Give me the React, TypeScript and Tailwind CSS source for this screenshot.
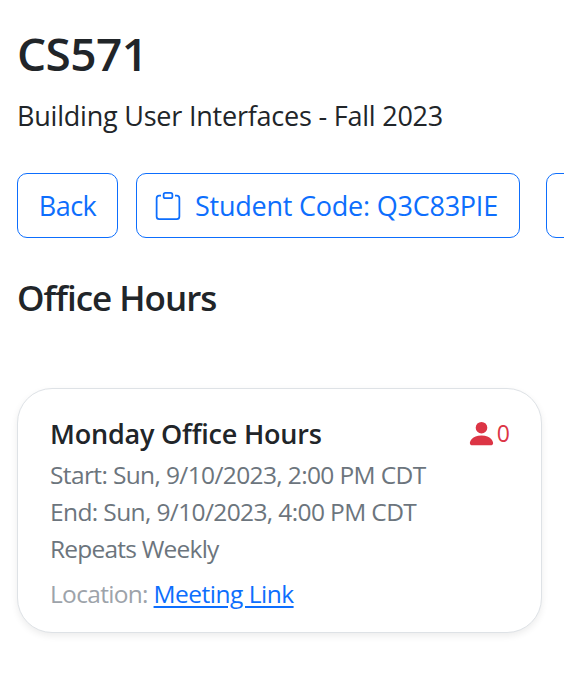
import { BsClipboard, BsPersonFill } from "react-icons/bs";

const details = [
  { text: "Start: Sun, 9/10/2023, 2:00 PM CDT", spacing: "tracking-[-0.63px]" },
  { text: "End: Sun, 9/10/2023, 4:00 PM CDT", spacing: "tracking-[-0.62px]" },
  { text: "Repeats Weekly", spacing: "tracking-[-0.78px]" },
];

export default function App() {
  return (
    <main className="h-[680px] w-full overflow-hidden whitespace-nowrap bg-white pl-[17px] pt-[25px] font-['Open_Sans',sans-serif] text-[#212529]">
      <h1 className="text-[46px] leading-[56px] font-semibold tracking-[-0.6px]">CS571</h1>
      <p className="mt-[14px] text-[27px] leading-[42px] tracking-[-0.22px]">Building User Interfaces - Fall 2023</p>
      <nav className="mt-[36px] flex h-[65px] text-[27px] text-[#0d6efd]">
        <button className="flex w-[101px] shrink-0 items-center justify-center rounded-[10px] border border-[#0d6efd] pt-px tracking-[-0.5px]">Back</button>
        <button className="ml-[18px] flex w-[384px] shrink-0 items-center rounded-[10px] border border-[#0d6efd] pl-[17px] pt-px tracking-[-0.23px]">
          <BsClipboard className="h-[28px] w-[28px] shrink-0" />
          <span className="ml-[13px]">Student Code: Q3C83PIE</span>
        </button>
        <button aria-label="More" className="ml-[26px] w-[120px] shrink-0 rounded-[10px] border border-[#0d6efd]" />
      </nav>
      <h2 className="mt-[38px] text-[35px] leading-[44px] font-semibold tracking-[-1px]">Office Hours</h2>
      <section className="mt-[68px] h-[245px] w-[525px] rounded-[35px] border border-[#dee2e6] bg-white px-[32px] pt-[27px] shadow-[0_3px_7px_rgba(0,0,0,0.075)]">
        <header className="flex h-[40px] items-center justify-between">
          <h3 className="-mt-[4px] text-[27px] leading-[36px] font-semibold tracking-[-0.2px]">Monday Office Hours</h3>
          <div className="-mt-[6px] -mr-px flex items-center text-[23px] text-[#dc3545]">
            <BsPersonFill className="h-[31px] w-[31px]" />
            <span>0</span>
          </div>
        </header>
        <div className="text-[24.5px] leading-[37px] text-[#6c757d]">
          {details.map((line) => (
            <p key={line.text} className={line.spacing}>{line.text}</p>
          ))}
          <p className="mt-[8px] tracking-[-0.68px] text-[#9da3aa]">
            Location: <a href="#" className="tracking-[-0.5px] text-[#0d6efd] underline decoration-2 underline-offset-[3px]">Meeting Link</a>
          </p>
        </div>
      </section>
    </main>
  );
}
